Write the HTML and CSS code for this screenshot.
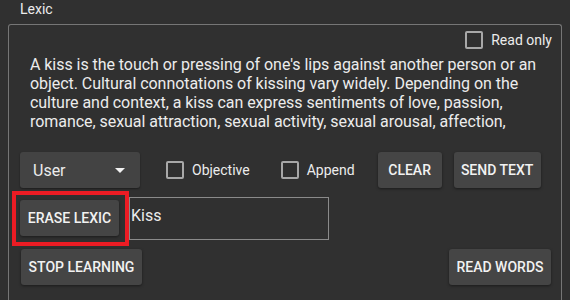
FILE: index.html
```html
<!DOCTYPE html>
<html>
<head>
<meta charset="utf-8">
<link rel="stylesheet" href="styles.css">
</head>
<body>
<div class="title">Lexic</div>
<div class="frame">
  <div class="ro-row">
    <span class="cb"></span><span class="cb-label">Read only</span>
  </div>
  <div class="text">A kiss is the touch or pressing of one's lips against another person or an object. Cultural connotations of kissing vary widely. Depending on the culture and context, a kiss can express sentiments of love, passion, romance, sexual attraction, sexual activity, sexual arousal, affection,</div>
  <div class="row row2">
    <div class="select"><span>User</span><span class="arrow"></span></div>
    <span class="cb cb-obj"></span><span class="cb-label">Objective</span>
    <span class="cb cb-app"></span><span class="cb-label">Append</span>
    <button class="btn btn-clear">CLEAR</button>
    <button class="btn btn-send">SEND TEXT</button>
  </div>
  <div class="row row3">
    <button class="btn btn-erase">ERASE LEXIC</button>
    <div class="input">Kiss</div>
    <div class="highlight"></div>
  </div>
  <div class="row row4">
    <button class="btn btn-stop">STOP LEARNING</button>
    <button class="btn btn-read">READ WORDS</button>
  </div>
</div>
</body>
</html>
```
FILE: styles.css
```css
html, body {
  margin: 0;
  padding: 0;
  background: #303030;
  height: 300px;
  overflow: hidden;
}
body {
  font-family: Roboto, "Liberation Sans", sans-serif;
  color: #ececec;
}
.title {
  height: 24px;
  padding-left: 20px;
  font-size: 14px;
  line-height: 19px;
}
.frame {
  margin: 0 8px;
  border: 1px solid #767676;
  border-bottom: none;
  border-radius: 3px 3px 0 0;
  height: 290px;
  position: relative;
}
.ro-row {
  display: flex;
  justify-content: flex-end;
  align-items: center;
  padding-top: 6px;
  padding-right: 9px;
  height: 18px;
}
.cb {
  display: inline-block;
  box-sizing: border-box;
  width: 18px;
  height: 18px;
  border: 2px solid #a8a8a8;
  border-radius: 2px;
  flex: none;
}
.cb-label {
  margin-left: 8px;
  font-size: 14px;
}
.text {
  margin: 6px 0 0 21px;
  font-size: 16px;
  line-height: 19px;
  width: 520px;
  height: 76px;
  letter-spacing: -0.05px;
}
.row {
  display: flex;
  align-items: center;
}
.row2 {
  margin-top: 21px;
  height: 36px;
  padding-left: 11px;
}
.select {
  width: 120px;
  height: 36px;
  box-sizing: border-box;
  background: #434343;
  border-radius: 3px;
  display: flex;
  align-items: center;
  justify-content: space-between;
  padding: 0 15px 0 13px;
  font-size: 16px;
  box-shadow: 0 1px 2px rgba(0,0,0,0.4);
}
.arrow {
  width: 0;
  height: 0;
  border-left: 5px solid transparent;
  border-right: 5px solid transparent;
  border-top: 5px solid #f2f2f2;
}
.cb-obj { margin-left: 26px; }
.cb-app { margin-left: 31px; }
.btn {
  font-family: Roboto, "Liberation Sans", sans-serif;
  font-weight: 500;
  font-size: 14px;
  color: #f2f2f2;
  background: #454545;
  border: none;
  border-radius: 3px;
  height: 36px;
  padding: 0;
  box-shadow: 0 1px 3px rgba(0,0,0,0.45);
  flex: none;
}
.btn-clear { width: 64px; margin-left: 23px; }
.btn-send { width: 87px; margin-left: 12px; }
.row3 {
  margin-top: 9px;
  height: 43px;
  padding-left: 11px;
  position: relative;
}
.btn-erase { width: 99px; align-self: flex-start; margin-top: 3px; }
.input {
  box-sizing: border-box;
  margin-left: 10px;
  width: 200px;
  height: 43px;
  border: 1px solid #8a8a8a;
  font-size: 16px;
  padding: 8px 0 0 1px;
}
.highlight {
  position: absolute;
  left: 3px;
  top: -6px;
  width: 117px;
  height: 55px;
  box-sizing: border-box;
  border: 4px solid #ec1c24;
}
.row4 {
  margin-top: 9px;
  height: 36px;
  padding-left: 12px;
  justify-content: space-between;
  padding-right: 10px;
}
.btn-stop { width: 121px; }
.btn-read { width: 102px; }
```
